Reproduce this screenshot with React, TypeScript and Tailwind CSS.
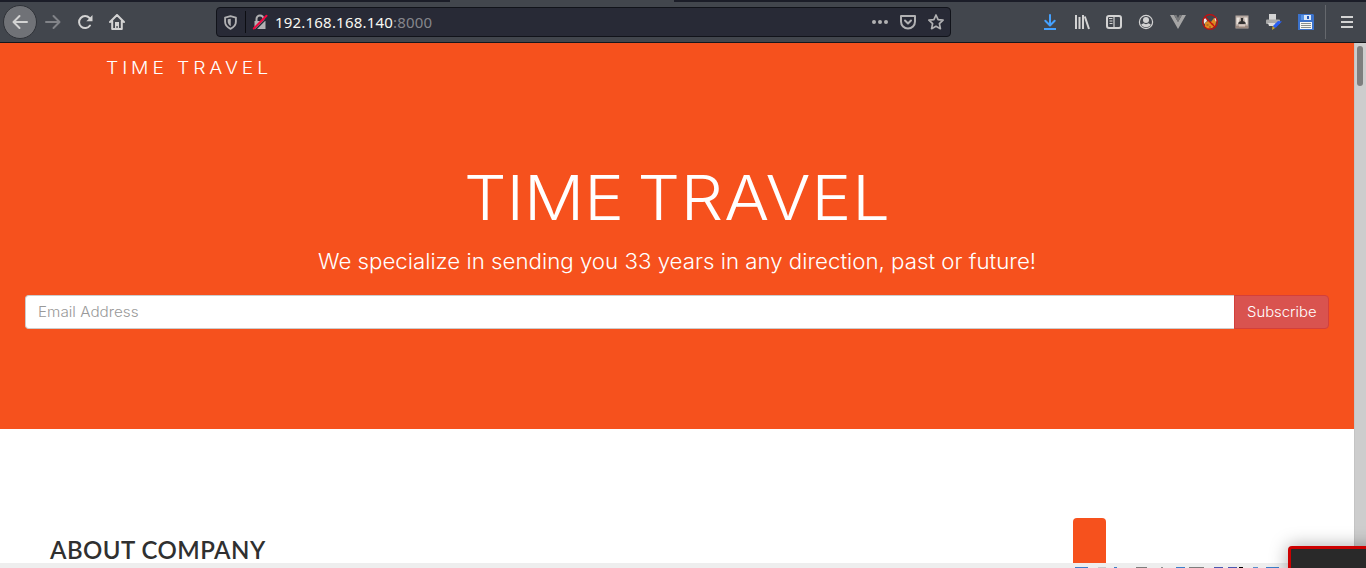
import React from "react";

type IconProps = { children: React.ReactNode; className?: string };

function Icon({ children, className = "" }: IconProps) {
  return (
    <svg viewBox="0 0 16 16" className={`h-4 w-4 shrink-0 ${className}`} fill="none">
      {children}
    </svg>
  );
}

const stroke = {
  stroke: "currentColor",
  strokeWidth: 2,
  strokeLinecap: "round" as const,
  strokeLinejoin: "round" as const,
};

const BackIcon = () => (
  <Icon><path {...stroke} d="M15 8H2M7.5 2 1.5 8l6 6" /></Icon>
);
const ForwardIcon = () => (
  <Icon><path {...stroke} d="M1 8h13M8.5 2l6 6-6 6" /></Icon>
);
const ReloadIcon = () => (
  <Icon>
    <path {...stroke} d="M13 11.5A6 6 0 1 1 12.5 4" />
    <path fill="currentColor" d="M15.5 1v6.2H9.3l2.4-2.2 1.6-1.8z" />
  </Icon>
);
const HomeIcon = () => (
  <Icon>
    <path {...stroke} d="M1 8l7-7 7 7M3.2 7v8h9.6V7" />
    <path fill="currentColor" d="M6 8h4v7H8.7v-3H7.4v3H6z" />
  </Icon>
);
const ShieldIcon = () => (
  <svg viewBox="0 0 14 16" className="h-[15px] w-[13px]" fill="none">
    <path {...stroke} d="M7 1.2l5.8 1.5v4.6c0 3.6-2.3 6-5.8 7.5-3.5-1.5-5.8-3.9-5.8-7.5V2.7z" />
    <path fill="currentColor" d="M7.3 4v8C5 10.8 4 9 4 7V4.6z" />
  </svg>
);
const LockIcon = () => (
  <Icon>
    <path fill="currentColor" d="M2.5 7h11v8h-11z" />
    <path stroke="currentColor" strokeWidth="2" d="M4.5 7V5a3.5 3.5 0 0 1 7 0v2" />
    <path stroke="#282a36" strokeWidth="1.5" d="M3 16 16 3" />
    <path stroke="#f2063f" strokeWidth="2" strokeLinecap="round" d="M1.8 14.5 14.5 1.8" />
  </Icon>
);
const DotsIcon = () => (
  <Icon>
    <circle cx="2" cy="8" r="2" fill="currentColor" />
    <circle cx="8" cy="8" r="2" fill="currentColor" />
    <circle cx="14" cy="8" r="2" fill="currentColor" />
  </Icon>
);
const PocketIcon = () => (
  <Icon>
    <path {...stroke} d="M1 2h14v5.5a7 7 0 0 1-14 0z" />
    <path {...stroke} d="M5 6.5l3 3 3-3" />
  </Icon>
);
const StarIcon = () => (
  <Icon>
    <path {...stroke} strokeWidth="1.7" d="M8 1l2.100 4.600 5 .6-3.700 3.500 1 5L8 12.300l-4.400 2.400 1-5L0.900 6.200l5-.6z" />
  </Icon>
);
const DownloadIcon = () => (
  <Icon className="text-[#45a1ff]">
    <path {...stroke} d="M8 1v10M3.3 6.8 8 11.5l4.7-4.7" />
    <path stroke="currentColor" strokeWidth="2" d="M2 15h12" />
  </Icon>
);
const LibraryIcon = () => (
  <Icon>
    <path stroke="currentColor" strokeWidth="2" d="M2 1v14M5.5 3v12M9 1v14M10.8 2.5 15 15" />
  </Icon>
);
const SidebarIcon = () => (
  <Icon>
    <rect x="1" y="2" width="14" height="12" rx="2" stroke="currentColor" strokeWidth="2" />
    <path stroke="currentColor" strokeWidth="1.2" d="M8 2v12M3 4.5h3.5M3.5 7h3M3.5 9.5h3" />
  </Icon>
);
const AccountIcon = () => (
  <Icon>
    <circle cx="8" cy="8" r="6.6" stroke="currentColor" strokeWidth="1.2" />
    <circle cx="8" cy="6" r="3" fill="currentColor" />
    <path fill="currentColor" d="M3.2 10.5 5.5 9.3c1.5 1.1 3.5 1.1 5 0l2.3 1.2C11.5 14 4.5 14 3.2 10.5z" />
  </Icon>
);
const VueIcon = () => (
  <Icon>
    <path fill="#a5a5a5" d="M0 1h4l4 7 4-7h4L8 15z" />
    <path fill="#77787a" d="M4 1h2.5L8 4l1.5-3H12L8 8z" />
  </Icon>
);
const FoxIcon = () => (
  <Icon>
    <path fill="#f0e8e2" d="M1.5 5 4 4l1 3-3 3zM14 3l1 4-2 1-1-3z" />
    <path fill="#e08a22" d="M3 9l3-2 3 1 3-4 2 4-1 4-3 2-5 1-2-2z" />
    <path stroke="#70451d" strokeWidth="0.8" d="M4.5 11h2M9.5 10h2M7 13h2" />
    <circle cx="8" cy="8" r="7.3" stroke="#c80c0c" strokeWidth="1.2" />
    <path stroke="#c80c0c" strokeWidth="1.2" d="M3 3l10 10" />
  </Icon>
);
const SpyIcon = () => (
  <Icon>
    <rect x="1.5" y="1.5" width="13" height="13" fill="#b3a69f" />
    <path fill="#e9e2dc" d="M2.5 3.5H6l-1 4-1.5 3h-1zM10 3.5h3.5v7H12l-1-3z" />
    <path fill="#303030" d="M7 4h2v3l2 1 1 1.5-2 .5H6l-2-.5L5 8l2-1z" />
    <path fill="#9b8a80" d="M2 12h12v2H2z" />
    <path fill="#d7c9c1" d="M5 10.500h6v2H5z" />
  </Icon>
);
const PrinterIcon = () => (
  <Icon>
    <path fill="#d4d4d4" d="M3 0h7v6H3z" />
    <rect x="0" y="5.5" width="14" height="4.500" rx="1" fill="#a8a8a8" />
    <path fill="#ddd" d="M2 9h7v3H3z" />
    <path fill="#285ff2" d="M7 12l5-5 4 .5-6 6-3 1z" />
    <path fill="#c7a62b" d="M6.5 12l2.500 2-3 2z" />
  </Icon>
);
const FloppyIcon = () => (
  <Icon>
    <path fill="#3b72cb" d="M0 0h15l1 1v15H0z" />
    <path fill="#dce8f8" d="M3 1h10v5H3z" />
    <path fill="#5792e4" d="M3 1h3v5H3z" />
    <path fill="#f7f7f5" d="M2 8h12v7H2z" />
    <path fill="#2458b8" d="M9 2h2v3H9z" />
    <path stroke="#8a8f8c" d="M3 9.5h10M3 11.5h10M3 13.5h10" />
  </Icon>
);
const MenuIcon = () => (
  <Icon><path stroke="currentColor" strokeWidth="2" d="M2 3h12M2 8h12M2 13h12" /></Icon>
);

function Toolbar() {
  return (
    <header className="flex h-[43px] shrink-0 flex-col border-b border-[#15161b] bg-[#42464d] text-[#d3d3d3]">
      <div className="flex h-[2px] shrink-0">
        <div className="w-[450px] bg-[#1b1d28]" />
        <div className="w-[224px] bg-[#42464d]" />
        <div className="flex-1 bg-[#1b1d28]" />
      </div>
      <div className="flex h-10 items-center pl-[3px]">
        <div className="flex h-[34px] w-[34px] items-center justify-center rounded-full border border-[#2f3238] bg-[#707277]"><BackIcon /></div>
        <div className="ml-2 flex gap-4">
          <span className="text-[#818388]"><ForwardIcon /></span>
          <ReloadIcon />
          <HomeIcon />
        </div>
        <div className="ml-[91px] flex h-[30px] w-[735px] items-center rounded border border-[#11131a] bg-[#282a36] text-[#b1b1b3]">
          <div className="ml-[7px]"><ShieldIcon /></div>
          <div className="ml-2 h-[22px] w-px bg-[#0c0d12]" />
          <div className="ml-[6px]"><LockIcon /></div>
          <div className="ml-[7px] font-['Noto_Sans'] text-[15px] leading-5 tracking-[0.2px] text-[#f8f8f2]">192.168.168.140<span className="text-[#85868c]">:8000</span></div>
          <div className="mr-[6px] ml-auto flex gap-3"><DotsIcon /><PocketIcon /><StarIcon /></div>
        </div>
        <div className="ml-[91px] flex gap-4">
          <DownloadIcon /><LibraryIcon /><SidebarIcon /><AccountIcon /><VueIcon /><FoxIcon /><SpyIcon /><PrinterIcon /><FloppyIcon />
        </div>
        <div className="ml-[11px] h-[34px] w-px bg-[#65686d]" />
        <div className="ml-[13px]"><MenuIcon /></div>
      </div>
    </header>
  );
}

function ClippedRow() {
  return (
    <footer className="flex h-[5px] items-end bg-[#eee] pl-[1075px]">
      <i className="h-px w-[13px] bg-[#3c7fca]" />
      <i className="ml-[10px] h-px w-2 bg-[#cacaca]" />
      <i className="ml-2 h-px w-[3px] bg-[#3c7fca]" />
      <i className="ml-[19px] h-px w-[11px] bg-[#7d7d7d]" />
      <i className="ml-[14px] h-px w-[2px] bg-[#8d8d8d]" />
      <i className="ml-[13px] h-px w-[9px] bg-[#3c7fca]" />
      <i className="ml-[4px] h-px w-[15px] bg-[#7d7d7d]" />
      <i className="ml-[10px] h-px w-[9px] bg-[#4b58b0]" />
      <i className="ml-[5px] h-px w-[9px] bg-[#4b58b0]" />
      <i className="ml-[2px] h-px w-[4px] bg-black" />
      <i className="ml-[10px] h-px w-[5px] bg-[#5b8fcd]" />
      <i className="ml-[8px] h-px w-[13px] bg-[#3c7fca]" />
    </footer>
  );
}

export default function App() {
  return (
    <div className="relative flex h-[568px] w-[1366px] flex-col overflow-hidden bg-white font-['Inter',sans-serif]">
      <Toolbar />
      <div className="flex h-[520px] shrink-0">
        <main className="w-[1354px]">
          <section className="flex h-[386px] flex-col bg-[#f6511d] text-white">
            <div className="ml-[106px] flex h-[50px] w-[200px] origin-left scale-x-[1.105] items-center text-[17.5px] font-light tracking-[3.5px]">TIME TRAVEL</div>
            <h1 className="mt-[66px] ml-[464px] h-[78px] w-[400px] origin-left scale-x-[1.078] text-[62px] leading-[78px] font-light whitespace-nowrap [word-spacing:-5px]">TIME <span className="tracking-[0.9px]">TRAVEL</span></h1>
            <p className="mt-[10px] ml-[318px] h-[30px] w-[690px] origin-left scale-x-[1.060] text-[21px] leading-[30px] font-light whitespace-nowrap">We specialize in sending you 33 years in any direction, past or future!</p>
            <div className="mt-[18px] ml-[25px] flex h-[34px] w-[1304px] text-[14px] leading-5 font-light">
              <div className="flex-1 rounded-l border border-r-0 border-[#ccc] bg-white pt-[6px] pl-3 text-[#999]"><span className="inline-block origin-left scale-x-[1.090]">Email Address</span></div>
              <button className="w-[95px] rounded-r border border-[#d43f3a] bg-[#d9534f]"><span className="inline-block scale-x-[1.060]">Subscribe</span></button>
            </div>
          </section>
          <section className="flex h-[134px] justify-between overflow-hidden pr-[248px] pl-[50px]">
            <h2 className="mt-[106px] font-['Lato'] text-[24px] leading-[30px] font-semibold tracking-[0.45px] text-[#303030]">ABOUT COMPANY</h2>
            <div className="mt-[89px] h-[60px] w-[33px] rounded-t bg-[#f6511d]" />
          </section>
        </main>
        <aside className="flex flex-1 border-l border-[#c4c4c4] bg-[#cdcdcd] pt-[3px] pl-[2px]">
          <div className="h-10 w-[6px] rounded-full bg-[#7e7e7e]" />
        </aside>
      </div>
      <ClippedRow />
      <div className="absolute top-[546px] left-[1288px] h-8 w-24 rounded-tl-[4px] border-t-[3px] border-l-[3px] border-[#cc0000] bg-[#292929] shadow-[0_0_18px_rgba(0,0,0,0.35)]" />
    </div>
  );
}
